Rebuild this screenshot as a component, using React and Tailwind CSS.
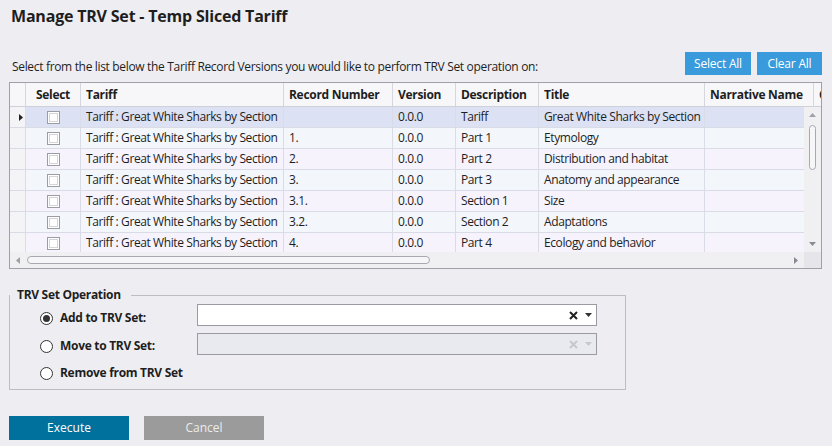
import React from "react";

const cols = [
  { label: "", w: 16 },
  { label: "Select", w: 55, center: true },
  { label: "Tariff", w: 203 },
  { label: "Record Number", w: 109 },
  { label: "Version", w: 63 },
  { label: "Description", w: 83 },
  { label: "Title", w: 166 },
  { label: "Narrative Name", w: 109 },
  { label: "Category", w: 60 },
];

const rows = [
  ["", "Tariff", "Great White Sharks by Section"],
  ["1.", "Part 1", "Etymology"],
  ["2.", "Part 2", "Distribution and habitat"],
  ["3.", "Part 3", "Anatomy and appearance"],
  ["3.1.", "Section 1", "Size"],
  ["3.2.", "Section 2", "Adaptations"],
  ["4.", "Part 4", "Ecology and behavior"],
];

function Checkbox() {
  return (
    <div className="w-[13px] h-[13px] border border-[#9c9ca4] bg-white p-[1px]">
      <div className="w-full h-full border border-[#d4d4da]" />
    </div>
  );
}

function Radio({ checked }) {
  return (
    <div className="w-[13px] h-[13px] rounded-full border border-[#333] bg-white flex items-center justify-center">
      {checked && <div className="w-[7px] h-[7px] rounded-full bg-[#333]" />}
    </div>
  );
}

function Combo({ disabled }) {
  const c = disabled ? "#c8c8cc" : "#222";
  return (
    <div
      className={
        "w-[400px] h-[22px] border border-[#9a9aa0] flex items-center justify-end pr-[4px] gap-[7px] " +
        (disabled ? "bg-[#e9eaef]" : "bg-white")
      }
    >
      <svg width="9" height="9" viewBox="0 0 9 9">
        <path d="M1 1 L8 8 M8 1 L1 8" stroke={c} strokeWidth="2" />
      </svg>
      <svg width="7" height="4" viewBox="0 0 7 4">
        <path d="M0 0 H7 L3.5 4 Z" fill={disabled ? "#c8c8cc" : "#333"} />
      </svg>
    </div>
  );
}

function Row({ r, i }) {
  const bg = i === 0 ? "bg-[#dce2f4]" : i % 2 === 1 ? "bg-[#f3f6fb]" : "bg-[#f6f3fd]";
  const cells = ["", "", "Tariff : Great White Sharks by Section", r[0], "0.0.0", r[1], r[2], "", ""];
  return (
    <div className="flex h-[21px] shrink-0">
      {cols.map((c, j) => (
        <div
          key={j}
          style={{ width: c.w }}
          className={
            "shrink-0 h-full border-r border-b border-[#d9dce6] flex items-center whitespace-nowrap overflow-hidden " +
            (j === 0 ? "bg-[#f4f4f7] justify-center " : bg + " ") +
            (j === 1 ? "justify-center" : "pl-[5px]")
          }
        >
          {j === 0 && i === 0 && (
            <svg width="4" height="7" viewBox="0 0 4 7" className="ml-[1px]">
              <path d="M0 0 L4 3.5 L0 7 Z" fill="#222" />
            </svg>
          )}
          {j === 1 && <Checkbox />}
          {j > 1 && cells[j]}
        </div>
      ))}
    </div>
  );
}

export default function App() {
  return (
    <div
      className="w-[832px] h-[446px] bg-[#eeeef2] text-[#1e1e1e] overflow-hidden"
      style={{ fontFamily: "'Open Sans', 'Noto Sans', sans-serif" }}
    >
      <div className="pt-[6px] pl-[11px] text-[16px] leading-[20px] font-bold tracking-[-0.2px]">
        Manage TRV Set - Temp Sliced Tariff
      </div>

      <div className="mt-[26px] flex items-end justify-between pl-[12px] pr-[10px] h-[23px]">
        <div className="text-[12px] leading-[16px] tracking-[-0.33px]">
          Select from the list below the Tariff Record Versions you would like to perform TRV Set operation on:
        </div>
        <div className="flex gap-[6px]">
          <button className="w-[66px] h-[23px] bg-[#3a9bdc] text-white text-[12px] tracking-[-0.2px]">Select All</button>
          <button className="w-[65px] h-[23px] bg-[#3a9bdc] text-white text-[12px] tracking-[-0.2px]">Clear All</button>
        </div>
      </div>

      <div className="mt-[7px] ml-[9px] w-[813px] h-[187px] border border-[#a0a0a8] bg-white flex flex-col overflow-hidden text-[12px] tracking-[-0.4px]">
        <div className="flex h-[24px] shrink-0 bg-[#f7f7f9] border-b border-[#cfd1d9]">
          {cols.map((c, j) => (
            <div
              key={j}
              style={{ width: c.w }}
              className={
                "shrink-0 h-full border-r border-[#d5d6de] flex items-center font-bold whitespace-nowrap overflow-hidden tracking-[-0.3px] " +
                (c.center ? "justify-center" : "pl-[5px]")
              }
            >
              {c.label}
            </div>
          ))}
        </div>

        <div className="flex h-[145px] shrink-0">
          <div className="w-[794px] overflow-hidden flex flex-col">
            {rows.map((r, i) => (
              <Row key={i} r={r} i={i} />
            ))}
          </div>
          <div className="w-[17px] bg-[#f0f0f3] flex flex-col items-center pt-[6px]">
            <svg width="7" height="4" viewBox="0 0 7 4">
              <path d="M0 4 H7 L3.5 0 Z" fill="#a0a0a8" />
            </svg>
            <div className="mt-[8px] w-[7px] h-[45px] rounded-full border border-[#a8a8b0] bg-[#f6f6f8]" />
            <div className="flex-1" />
            <svg width="7" height="4" viewBox="0 0 7 4" className="mb-[6px]">
              <path d="M0 0 H7 L3.5 4 Z" fill="#8a8a94" />
            </svg>
          </div>
        </div>

        <div className="flex flex-1">
          <div className="w-[794px] bg-[#f0f0f3] flex items-center pl-[6px] pr-[6px]">
            <svg width="4" height="7" viewBox="0 0 4 7">
              <path d="M4 0 L0 3.5 L4 7 Z" fill="#a0a0a8" />
            </svg>
            <div className="ml-[7px] w-[403px] h-[8px] rounded-full border border-[#a8a8b0] bg-[#f6f6f8]" />
            <div className="flex-1" />
            <svg width="4" height="7" viewBox="0 0 4 7">
              <path d="M0 0 L4 3.5 L0 7 Z" fill="#8a8a94" />
            </svg>
          </div>
          <div className="flex-1 bg-[#e6e6ea]" />
        </div>
      </div>

      <fieldset className="mt-[18px] ml-[9px] w-[617px] border border-[#bdbdc3] pb-[5px]">
        <legend className="pl-[7px] pr-[10px] text-[12px] leading-[16px] font-bold tracking-[-0.3px]">
          TRV Set Operation
        </legend>
        <div className="flex flex-col text-[12px] font-bold tracking-[-0.3px]">
          <div className="flex items-center h-[22px] mt-[1px]">
            <div className="w-[187px] flex items-center gap-[7px] pl-[30px] mt-[6px]">
              <Radio checked />
              <span>Add to TRV Set:</span>
            </div>
            <Combo />
          </div>
          <div className="flex items-center h-[22px] mt-[7px]">
            <div className="w-[187px] flex items-center gap-[7px] pl-[30px] mt-[4px]">
              <Radio />
              <span>Move to TRV Set:</span>
            </div>
            <Combo disabled />
          </div>
          <div className="flex items-center h-[22px] mt-[7px]">
            <div className="flex items-center gap-[7px] pl-[30px]">
              <Radio />
              <span>Remove from TRV Set</span>
            </div>
          </div>
        </div>
      </fieldset>

      <div className="mt-[26px] ml-[9px] flex gap-[15px] text-[12px]">
        <button className="w-[120px] h-[24px] bg-[#00709d] text-white">Execute</button>
        <button className="w-[120px] h-[24px] bg-[#9b9b9b] text-[#ececec]">Cancel</button>
      </div>
    </div>
  );
}
